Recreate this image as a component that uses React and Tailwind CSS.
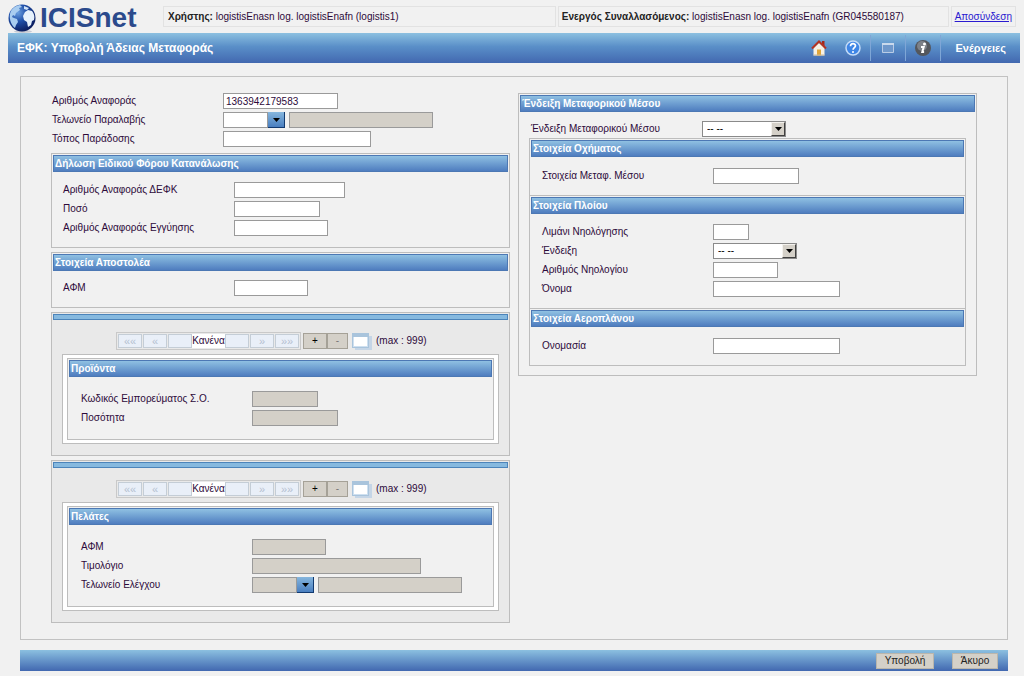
import { useState } from "react";

const fieldBase = "h-4 border border-[#9a9a9a] px-0.5 text-[10px] leading-3 text-[#2d0a3a] outline-none";

const TextField = ({ id, width, disabled, value, onChange, label }) => (
  <input
    id={id}
    type="text"
    aria-label={label}
    disabled={disabled}
    value={value}
    onChange={onChange}
    className={`${fieldBase} ${width} ${disabled ? "bg-[#d4d0c8]" : "bg-white"}`}
  />
);

const Row = ({ id, label, children }) => (
  <div className="flex h-4 items-center">
    <label htmlFor={id} className="w-[171px] shrink-0 text-[10px] leading-4 whitespace-nowrap text-[#2d0a3a]">
      {label}
    </label>
    {children}
  </div>
);

const DownArrow = () => (
  <svg viewBox="0 0 7 4" className="h-1 w-[7px]" fill="#000" aria-hidden="true">
    <path d="M0 0h7L3.5 4z" />
  </svg>
);

// Code box with lookup button and a read only description
const LookupField = ({ id, disabled, name }) => (
  <div className="flex items-center">
    <TextField id={id} width="w-[45px]" disabled={disabled} />
    <button
      type="button"
      aria-label={`Αναζήτηση ${name}`}
      className="flex h-4 w-[17px] items-center justify-center border-r border-b border-[#123a70] bg-linear-to-b from-[#86b6dd] to-[#4a7fc0]"
    >
      <DownArrow />
    </button>
    <div className="ml-1 flex">
      <TextField width="w-36" label={`Περιγραφή ${name}`} disabled />
    </div>
  </div>
);

const SelectField = ({ id }) => (
  <div className="relative flex h-4 w-[84px]">
    <select id={id} className="h-4 w-full appearance-none border border-[#8a8a8a] bg-white px-1 text-[10px] leading-3 text-black outline-none">
      <option>-- --</option>
    </select>
    <span className="pointer-events-none absolute top-px right-px flex h-3.5 w-3.5 items-center justify-center border border-t-[#f4f2ee] border-r-[#404040] border-b-[#404040] border-l-[#f4f2ee] bg-[#d4d0c8]">
      <DownArrow />
    </span>
  </div>
);

const TitleBar = ({ children }) => (
  <h2 className="h-[17px] border border-[#4c78b4] bg-linear-to-b from-[#8fc0e2] to-[#4f7dbf] px-px text-[10px] leading-4 font-bold whitespace-nowrap text-white">
    {children}
  </h2>
);

const Panel = ({ title, children }) => (
  <section className="border border-[#bdbdbd] p-px">
    <TitleBar>{title}</TitleBar>
    {children}
  </section>
);

const navCell = "h-3.5 w-6 border border-[#c4cdd6] bg-[#e9eff8] text-[11px] leading-3 text-[#b4c0d0]";
const editCell = "h-4 border border-[#a5a197] bg-[#d4d0c8] text-[10px] leading-3";

// Pager above a repeating group of fields
const Pager = () => (
  <div className="ml-[54px] flex items-center text-[#2d0a3a]">
    <div className="flex gap-px border border-[#c9c9c9] p-px">
      <button type="button" className={navCell}>««</button>
      <button type="button" className={navCell}>«</button>
      <div className="flex">
        <button type="button" aria-label="Προηγούμενο" className={navCell} />
        <span className="w-[33px] bg-white text-center text-[10px] leading-3.5">Κανένα</span>
        <button type="button" aria-label="Επόμενο" className={navCell} />
      </div>
      <button type="button" className={navCell}>»</button>
      <button type="button" className={navCell}>»»</button>
    </div>
    <button type="button" className={`${editCell} ml-0.5 w-6 text-black`}>+</button>
    <button type="button" className={`${editCell} w-[21px] text-[#777]`}>-</button>
    <svg viewBox="0 0 20 18" className="ml-1 h-[18px] w-5" aria-hidden="true">
      <path d="M3 4h17v14H3z" fill="#c5d5e6" />
      <path d="M0 1h17v15H0z" fill="#a9c4dc" />
      <path d="M1 5h15v10H1z" fill="#cfe0f0" />
      <path d="M2 5h13v9H2z" fill="#fff" />
    </svg>
    <span className="ml-1 text-[10px] leading-4">(max : 999)</span>
  </div>
);

const GroupPanel = ({ title, children }) => (
  <section className="border border-[#bdbdbd] bg-[#e9e9e9] p-px">
    <div className="h-1.5 border border-[#4c84ba] bg-[#86b9df]" />
    <div className="px-[9px] pt-3 pb-2.5">
      <Pager />
      <div className="mt-1 border border-[#bdbdbd] bg-white px-1 py-[3px]">
        <div className="border border-[#bdbdbd] bg-[#f1f1f1] p-px">
          <TitleBar>{title}</TitleBar>
          <div className="flex flex-col gap-[3px] px-3 pt-3.5 pb-3">{children}</div>
        </div>
      </div>
    </div>
  </section>
);

const Globe = () => (
  <svg viewBox="0 0 30 30" className="size-[30px]" aria-hidden="true">
    <defs>
      <radialGradient id="sea" cx="0.35" cy="0.3" r="0.75">
        <stop offset="0" stopColor="#6a9fe0" />
        <stop offset="0.45" stopColor="#1f4fa8" />
        <stop offset="1" stopColor="#0a1a5a" />
      </radialGradient>
    </defs>
    <ellipse cx="15" cy="28.500" rx="9" ry="1.500" fill="#c5c9d3" />
    <circle cx="14" cy="15" r="13.500" fill="url(#sea)" />
    <path d="M3 8C5 5 8 2.500 12 2l2 2-3 1 1 2-4 3-1 3-2-1-1 2 2 1 3 1 1 3-2 3-1 3C3 22 0 14 3 8z" fill="#a9cdf0" />
    <path d="M17 9l3-2 4 1c2 3 3 5 2 9l-2 1-1 4-3 2-1-5-3-2-1-4z" fill="#e6f1fc" />
    <path d="M16 3l5 2-2 2-3-1z" fill="#cfe2f6" />
  </svg>
);

const HomeIcon = () => (
  <svg viewBox="0 0 16 16" className="size-4" aria-hidden="true">
    <path d="M11 1h2.500v5H11z" fill="#a3281c" />
    <path d="M2.500 8L8 3l5.500 5v7.500h-11z" fill="#f7f1e4" />
    <path d="M6 9.500h4v6H6z" fill="#e0a63a" />
    <path d="M1 8.500L8 1.500l7 7" fill="none" stroke="#b43322" strokeWidth="2" />
    <path d="M2.500 15h11" stroke="#c9b89a" />
  </svg>
);

const HelpIcon = () => (
  <svg viewBox="0 0 16 16" className="size-4" aria-hidden="true">
    <circle cx="8" cy="8" r="7" fill="#3f86e6" stroke="#c4dcf8" strokeWidth="1.500" />
    <path d="M5.500 6.200c0-3.400 5-3.200 5-.4 0 1.900-2.400 1.900-2.400 3.900" fill="none" stroke="#fff" strokeWidth="1.700" />
    <circle cx="8" cy="12" r="1" fill="#fff" />
  </svg>
);

const WindowIcon = () => (
  <svg viewBox="0 0 12 10" className="h-2.5 w-3" aria-hidden="true">
    <path d="M.5.500h11v9H.5z" fill="#6f98cb" stroke="#b9cce6" />
    <path d="M0 1h12" stroke="#c9d9ec" strokeWidth="2" />
  </svg>
);

const InfoIcon = () => (
  <svg viewBox="0 0 16 16" className="size-4" aria-hidden="true">
    <circle cx="8" cy="8" r="8" fill="#54575d" />
    <circle cx="7" cy="6" r="5" fill="#7d8188" />
    <circle cx="9.500" cy="4" r="1.500" fill="#fff" />
    <path d="M6 7h2.700l-1.400 5h1.800" fill="none" stroke="#fff" strokeWidth="2" />
  </svg>
);

const Header = () => (
  <header>
    <div className="flex h-[33px] items-center px-2">
      <div className="flex w-[155px] shrink-0 items-center gap-0.5 pt-0.5">
        <Globe />
        <span className="text-[28px] leading-8 font-bold text-[#2b4a8c]">ICISnet</span>
      </div>
      <div className="flex min-w-0 flex-1 gap-0.5 text-[10px] leading-[19px] whitespace-nowrap text-[#2d0a3a]">
        <p className="flex-1 border border-[#e2e2e2] px-1">
          <b className="text-[#222]">Χρήστης:</b> logistisEnasn log. logistisEnafn (logistis1)
        </p>
        <p className="flex-1 border border-[#e2e2e2] px-[3px]">
          <b className="text-[#222]">Ενεργός Συναλλασόμενος:</b> logistisEnasn log. logistisEnafn (GR045580187)
        </p>
        <p className="border border-[#e2e2e2] px-[3px]">
          <a href="#logout" className="text-[#2a1ad0] underline">Αποσύνδεση</a>
        </p>
      </div>
    </div>
    <div className="mr-1 ml-2 flex h-[30px] items-center justify-between bg-linear-to-b from-[#8cc0e0] via-[#5a8fc8] via-45% to-[#4268b0] text-white">
      <h1 className="pl-[9px] text-[12px] leading-4 font-bold">ΕΦΚ: Υποβολή Άδειας Μεταφοράς</h1>
      <nav className="flex items-center">
        <button type="button" aria-label="Αρχική" className="mr-[18px]"><HomeIcon /></button>
        <button type="button" aria-label="Βοήθεια" className="mr-[9px]"><HelpIcon /></button>
        <button type="button" aria-label="Παράθυρο" className="flex h-[26px] w-[35px] items-center justify-center border-l border-[#7fa6d6]"><WindowIcon /></button>
        <button type="button" aria-label="Πληροφορίες" className="flex h-[26px] w-[35px] items-center justify-center border-l border-[#7fa6d6]"><InfoIcon /></button>
        <button type="button" className="h-[26px] border-l border-[#7fa6d6] px-3.5 text-[11px] leading-4 font-bold">Ενέργειες</button>
      </nav>
    </div>
  </header>
);

const footerButton = "h-4 border border-[#bab6ac] bg-[#d4d0c8] text-[10px] leading-3 text-[#222]";

const App = () => {
  const [reference, setReference] = useState("1363942179583");

  return (
    <div className="min-h-screen bg-[#f1f1f1] font-['Liberation_Sans',Arial,sans-serif]">
      <Header />
      <form onSubmit={(e) => e.preventDefault()}>
        <main className="mt-[13px] mr-4 ml-5 grid grid-cols-2 items-start gap-2 border border-[#c2c2c2] py-4 pr-[30px] pl-[30px]">
          {/* Left column */}
          <div className="flex min-w-0 flex-col gap-1">
            <div className="mb-0.5 flex flex-col gap-[3px] pl-px">
              <Row id="reference" label="Αριθμός Αναφοράς">
                <TextField id="reference" width="w-[115px]" value={reference} onChange={(e) => setReference(e.target.value)} />
              </Row>
              <Row id="receiptOffice" label="Τελωνείο Παραλαβής">
                <LookupField id="receiptOffice" name="Τελωνείο Παραλαβής" />
              </Row>
              <Row id="deliveryPlace" label="Τόπος Παράδοσης">
                <TextField id="deliveryPlace" width="w-[148px]" />
              </Row>
            </div>
            <Panel title="Δήλωση Ειδικού Φόρου Κατανάλωσης">
              <div className="flex flex-col gap-[3px] px-2.5 pt-2.5 pb-2.5">
                <Row id="defk" label="Αριθμός Αναφοράς ΔΕΦΚ"><TextField id="defk" width="w-[111px]" /></Row>
                <Row id="amount" label="Ποσό"><TextField id="amount" width="w-[86px]" /></Row>
                <Row id="guarantee" label="Αριθμός Αναφοράς Εγγύησης"><TextField id="guarantee" width="w-[94px]" /></Row>
              </div>
            </Panel>
            <Panel title="Στοιχεία Αποστολέα">
              <div className="px-2.5 pt-[9px] pb-2.5">
                <Row id="senderVat" label="ΑΦΜ"><TextField id="senderVat" width="w-[74px]" /></Row>
              </div>
            </Panel>
            <GroupPanel title="Προϊόντα">
              <Row id="goodsCode" label="Κωδικός Εμπορεύματος Σ.Ο."><TextField id="goodsCode" width="w-[66px]" disabled /></Row>
              <Row id="quantity" label="Ποσότητα"><TextField id="quantity" width="w-[86px]" disabled /></Row>
            </GroupPanel>
            <GroupPanel title="Πελάτες">
              <Row id="clientVat" label="ΑΦΜ"><TextField id="clientVat" width="w-[74px]" disabled /></Row>
              <Row id="invoice" label="Τιμολόγιο"><TextField id="invoice" width="w-[169px]" disabled /></Row>
              <Row id="controlOffice" label="Τελωνείο Ελέγχου">
                <LookupField id="controlOffice" name="Τελωνείο Ελέγχου" disabled />
              </Row>
            </GroupPanel>
          </div>

          {/* Right column */}
          <Panel title="Ένδειξη Μεταφορικού Μέσου">
            <div className="px-[9px] pt-[9px] pb-2">
              <div className="px-0.5">
                <Row id="transport" label="Ένδειξη Μεταφορικού Μέσου"><SelectField id="transport" /></Row>
              </div>
              <div className="mt-px border border-[#bdbdbd]">
                <div className="p-px">
                  <TitleBar>Στοιχεία Οχήματος</TitleBar>
                  <div className="px-[11px] pt-[11px] pb-2.5">
                    <Row id="vehicle" label="Στοιχεία Μεταφ. Μέσου"><TextField id="vehicle" width="w-[86px]" /></Row>
                  </div>
                </div>
                <div className="border-t border-[#bdbdbd] p-px">
                  <TitleBar>Στοιχεία Πλοίου</TitleBar>
                  <div className="flex flex-col gap-[3px] px-[11px] pt-2.5 pb-2.5">
                    <Row id="port" label="Λιμάνι Νηολόγησης"><TextField id="port" width="w-9" /></Row>
                    <Row id="shipType" label="Ένδειξη"><SelectField id="shipType" /></Row>
                    <Row id="registry" label="Αριθμός Νηολογίου"><TextField id="registry" width="w-[65px]" /></Row>
                    <Row id="shipName" label="Όνομα"><TextField id="shipName" width="w-[127px]" /></Row>
                  </div>
                </div>
                <div className="border-t border-[#bdbdbd] p-px">
                  <TitleBar>Στοιχεία Αεροπλάνου</TitleBar>
                  <div className="px-[11px] pt-[11px] pb-2.5">
                    <Row id="aircraft" label="Ονομασία"><TextField id="aircraft" width="w-[127px]" /></Row>
                  </div>
                </div>
              </div>
            </div>
          </Panel>
        </main>
        <footer className="mt-2.5 mr-4 ml-5 flex h-[21px] items-center justify-end gap-[18px] bg-linear-to-b from-[#8cc0e0] to-[#4268b0] pr-2.5">
          <button type="submit" className={`${footerButton} w-[58px]`}>Υποβολή</button>
          <button type="button" className={`${footerButton} w-[46px]`}>Άκυρο</button>
        </footer>
      </form>
    </div>
  );
};

export default App;
